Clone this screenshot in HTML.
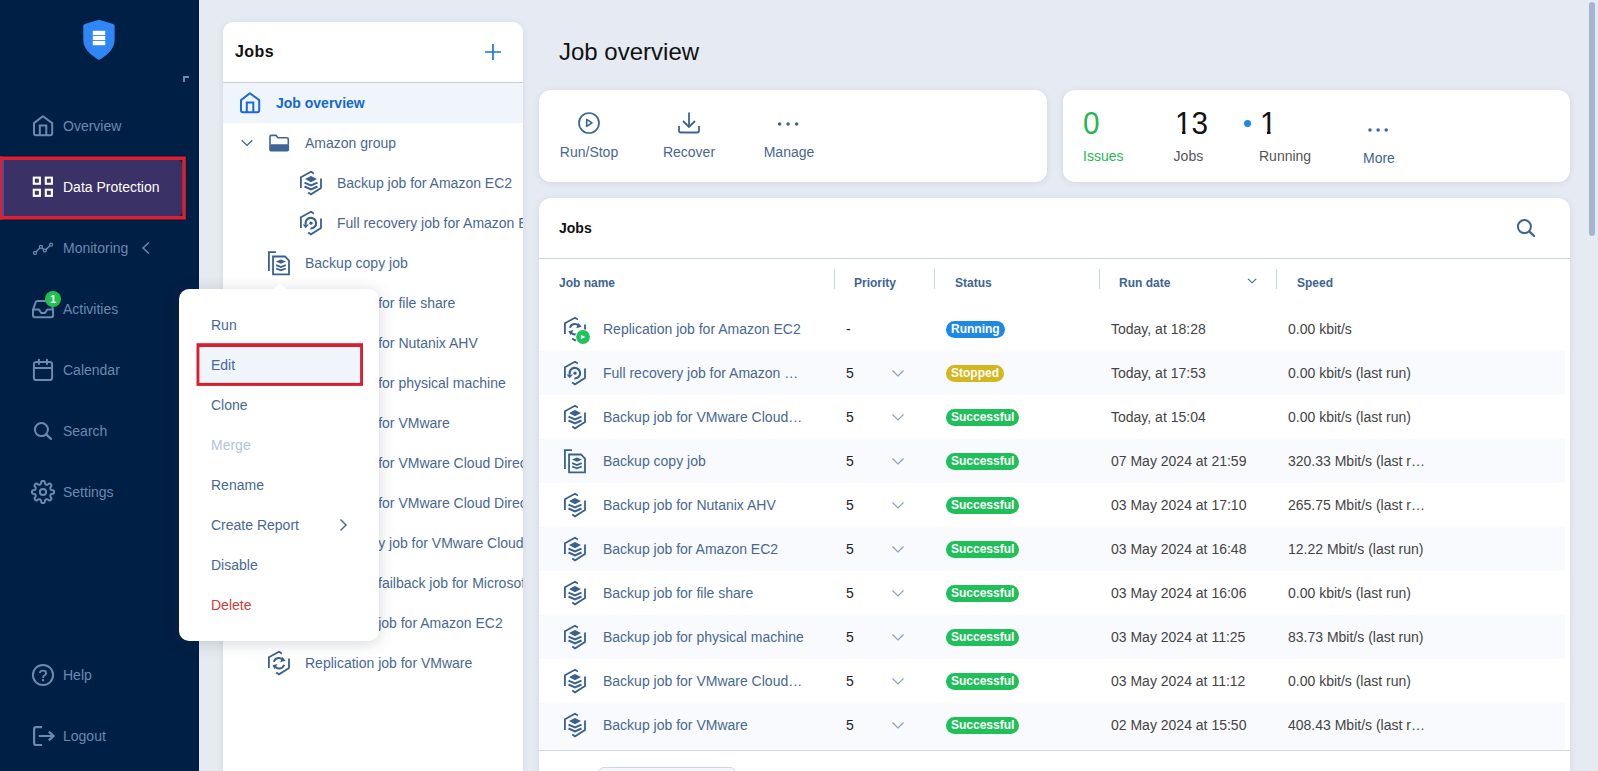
<!DOCTYPE html>
<html lang="en"><head><meta charset="utf-8"><title>Job overview</title>
<style>
html,body{margin:0;padding:0;}
body{width:1598px;height:771px;overflow:hidden;position:relative;background:#e6eaf3;font-family:"Liberation Sans",Arial,sans-serif;font-size:14px;}
#side{position:absolute;left:0;top:0;width:199px;height:771px;background:#001f44;}
#dp-bg{position:absolute;left:0;top:158px;width:183px;height:60px;background:#3a3166;border-radius:0 9px 9px 0;}
#dp-strip{position:absolute;left:2px;top:160px;width:2px;height:56px;background:#2158b8;}
.sitem{position:absolute;left:0;height:24px;line-height:24px;font-size:14px;white-space:nowrap;width:199px;}
.sitem span{position:absolute;left:63px;top:0;}
#tree{position:absolute;left:223px;top:22px;width:300px;height:760px;background:#fff;border-radius:10px 10px 0 0;overflow:hidden;box-shadow:0 1px 6px rgba(50,60,85,.11);}
.thead{position:absolute;left:12px;top:21px;font-size:16px;letter-spacing:.45px;font-weight:bold;color:#111;}
.tsel{position:absolute;left:0;top:60px;width:300px;height:41px;background:#f0f5fc;border-top:1px solid #c0cddc;box-sizing:border-box;}
.trow{position:absolute;height:20px;line-height:20px;font-size:14px;color:#486892;white-space:nowrap;}
#menu{position:absolute;left:179px;top:289px;width:200px;height:352px;background:#fff;border-radius:10px;box-shadow:0 2px 16px rgba(40,50,75,.20);}
.mi{position:absolute;left:32px;height:20px;line-height:20px;font-size:14px;white-space:nowrap;}
#title{position:absolute;left:559px;top:38px;font-size:24px;line-height:28px;color:#111;}
.card{position:absolute;background:#fff;border-radius:12px;box-shadow:0 1px 6px rgba(50,60,85,.11);}
.alabel{position:absolute;top:53px;text-align:center;font-size:14px;color:#486892;line-height:18px;}
.num{position:absolute;top:14px;font-size:32px;line-height:38px;transform:scaleX(.93);transform-origin:left center;}
.one{display:inline-block;clip-path:polygon(0 0,18px 0,18px 27px,11.300px 27px,11.300px 38px,7.500px 38px,7.500px 27px,0 27px);}
.nlab{position:absolute;top:57px;font-size:14px;line-height:18px;}
.th{position:absolute;top:77px;font-size:12px;font-weight:bold;color:#3d6494;line-height:16px;}
.row{position:absolute;left:0;width:1026px;height:44px;}
.row .c{position:absolute;top:12px;line-height:20px;font-size:14px;white-space:nowrap;}
.badge{position:absolute;top:14px;height:17px;line-height:17px;border-radius:8.500px;padding:0 5px;color:#fff;font-size:12px;font-weight:bold;}
#sb{position:absolute;left:1589px;top:2px;width:6px;height:234px;border-radius:3px;background:#a3b5d1;}
</style></head><body>
<div id="side"><div id="dp-bg"></div><div id="dp-strip"></div><svg width="190" height="66" viewBox="0 0 190 66" style="position:absolute;left:0;top:156px;"><path d="M0 2.200 H184.050 V61.750 H0" fill="none" stroke="#dd1f2e" stroke-width="3.500"/><rect x="0" y="0.450" width="2.500" height="63.050" fill="#dd1f2e"/></svg><div class="sitem" style="top:114px;color:#6c89b0"><svg width="24" height="24" viewBox="0 0 24 24" style="position:absolute;left:31px;top:0;overflow:visible;"><path d="M3 9.100 L11.900 2.300 L21.200 9.100 V19.200 Q21.200 21.200 19.200 21.200 H5 Q3 21.200 3 19.200 Z" fill="none" stroke="#6c89b0" stroke-width="2" stroke-linejoin="round"/><path d="M8.800 21.200 V11.400 H15.300 V21.200" fill="none" stroke="#6c89b0" stroke-width="2"/></svg><span>Overview</span></div><div class="sitem" style="top:175px;color:#ffffff"><svg width="24" height="24" viewBox="0 0 24 24" style="position:absolute;left:31px;top:0;overflow:visible;"><rect x="2.800" y="2.650" width="6.100" height="6.100" fill="none" stroke="#ffffff" stroke-width="2.100"/><rect x="14.800" y="2.650" width="6.100" height="6.100" fill="none" stroke="#ffffff" stroke-width="2.100"/><rect x="2.800" y="14.750" width="6.100" height="6.100" fill="none" stroke="#ffffff" stroke-width="2.100"/><rect x="14.800" y="14.750" width="6.100" height="6.100" fill="none" stroke="#ffffff" stroke-width="2.100"/></svg><span>Data Protection</span></div><div class="sitem" style="top:236px;color:#6c89b0"><svg width="24" height="24" viewBox="0 0 24 24" style="position:absolute;left:31px;top:0;overflow:visible;"><path d="M4 16.900 L9.900 10.800 L13.800 14.600 L20 8.700" fill="none" stroke="#6c89b0" stroke-width="1.500"/><circle cx="4" cy="16.900" r="1.500" fill="#001e42" stroke="#6c89b0" stroke-width="1.300"/><circle cx="9.900" cy="10.800" r="1.500" fill="#001e42" stroke="#6c89b0" stroke-width="1.300"/><circle cx="13.800" cy="14.600" r="1.500" fill="#001e42" stroke="#6c89b0" stroke-width="1.300"/><circle cx="20" cy="8.700" r="1.500" fill="#001e42" stroke="#6c89b0" stroke-width="1.300"/></svg><span>Monitoring</span></div><div class="sitem" style="top:297px;color:#6c89b0"><svg width="24" height="24" viewBox="0 0 24 24" style="position:absolute;left:31px;top:0;overflow:visible;"><path d="M2 12.600 L4.600 5.300 Q5 4 6.400 4 H18.200 Q19.600 4 20 5.300 L22.100 12.600 V18.200 Q22.100 20.200 20.100 20.200 H4 Q2 20.200 2 18.200 Z" fill="none" stroke="#6c89b0" stroke-width="2" stroke-linejoin="round"/><path d="M2 12.600 H8 L10.200 16 H14 L16.200 12.600 H22.100" fill="none" stroke="#6c89b0" stroke-width="2" stroke-linejoin="round"/></svg><span>Activities</span></div><div class="sitem" style="top:358px;color:#6c89b0"><svg width="24" height="24" viewBox="0 0 24 24" style="position:absolute;left:31px;top:0;overflow:visible;"><rect x="2.900" y="4" width="18.200" height="18.100" rx="2.400" fill="none" stroke="#6c89b0" stroke-width="2"/><path d="M2.900 9.900 H21.100 M7.900 1.100 V6.800 M16 1.100 V6.800" fill="none" stroke="#6c89b0" stroke-width="2"/></svg><span>Calendar</span></div><div class="sitem" style="top:419px;color:#6c89b0"><svg width="24" height="24" viewBox="0 0 24 24" style="position:absolute;left:31px;top:0;overflow:visible;"><circle cx="10.400" cy="10.600" r="6.500" fill="none" stroke="#6c89b0" stroke-width="2"/><path d="M15.200 15.400 L20 19.900" stroke="#6c89b0" stroke-width="2.200" stroke-linecap="round"/></svg><span>Search</span></div><div class="sitem" style="top:480px;color:#6c89b0"><svg width="24" height="24" viewBox="0 0 24 24" style="position:absolute;left:31px;top:0;overflow:visible;"><circle cx="12" cy="12" r="3.100" fill="none" stroke="#6c89b0" stroke-width="2"/><path d="M12.00 0.90 L12.36 0.93 L12.72 1.02 L13.07 1.18 L13.39 1.41 L13.69 1.75 L13.86 2.63 L13.98 3.52 L14.18 3.87 L14.39 4.13 L14.60 4.33 L14.83 4.49 L15.06 4.61 L15.31 4.69 L15.58 4.74 L15.88 4.75 L16.21 4.71 L16.60 4.61 L17.31 4.06 L18.05 3.55 L18.50 3.52 L18.90 3.59 L19.25 3.73 L19.57 3.92 L19.85 4.15 L20.08 4.43 L20.27 4.75 L20.41 5.10 L20.48 5.50 L20.45 5.95 L19.94 6.69 L19.39 7.40 L19.29 7.79 L19.25 8.12 L19.26 8.42 L19.31 8.69 L19.39 8.94 L19.51 9.17 L19.67 9.40 L19.87 9.61 L20.13 9.82 L20.48 10.02 L21.37 10.14 L22.25 10.31 L22.59 10.61 L22.82 10.93 L22.98 11.28 L23.07 11.64 L23.10 12.00 L23.07 12.36 L22.98 12.72 L22.82 13.07 L22.59 13.39 L22.25 13.69 L21.37 13.86 L20.48 13.98 L20.13 14.18 L19.87 14.39 L19.67 14.60 L19.51 14.83 L19.39 15.06 L19.31 15.31 L19.26 15.58 L19.25 15.88 L19.29 16.21 L19.39 16.60 L19.94 17.31 L20.45 18.05 L20.48 18.50 L20.41 18.90 L20.27 19.25 L20.08 19.57 L19.85 19.85 L19.57 20.08 L19.25 20.27 L18.90 20.41 L18.50 20.48 L18.05 20.45 L17.31 19.94 L16.60 19.39 L16.21 19.29 L15.88 19.25 L15.58 19.26 L15.31 19.31 L15.06 19.39 L14.83 19.51 L14.60 19.67 L14.39 19.87 L14.18 20.13 L13.98 20.48 L13.86 21.37 L13.69 22.25 L13.39 22.59 L13.07 22.82 L12.72 22.98 L12.36 23.07 L12.00 23.10 L11.64 23.07 L11.28 22.98 L10.93 22.82 L10.61 22.59 L10.31 22.25 L10.14 21.37 L10.02 20.48 L9.82 20.13 L9.61 19.87 L9.40 19.67 L9.17 19.51 L8.94 19.39 L8.69 19.31 L8.42 19.26 L8.12 19.25 L7.79 19.29 L7.40 19.39 L6.69 19.94 L5.95 20.45 L5.50 20.48 L5.10 20.41 L4.75 20.27 L4.43 20.08 L4.15 19.85 L3.92 19.57 L3.73 19.25 L3.59 18.90 L3.52 18.50 L3.55 18.05 L4.06 17.31 L4.61 16.60 L4.71 16.21 L4.75 15.88 L4.74 15.58 L4.69 15.31 L4.61 15.06 L4.49 14.83 L4.33 14.60 L4.13 14.39 L3.87 14.18 L3.52 13.98 L2.63 13.86 L1.75 13.69 L1.41 13.39 L1.18 13.07 L1.02 12.72 L0.93 12.36 L0.90 12.00 L0.93 11.64 L1.02 11.28 L1.18 10.93 L1.41 10.61 L1.75 10.31 L2.63 10.14 L3.52 10.02 L3.87 9.82 L4.13 9.61 L4.33 9.40 L4.49 9.17 L4.61 8.94 L4.69 8.69 L4.74 8.42 L4.75 8.12 L4.71 7.79 L4.61 7.40 L4.06 6.69 L3.55 5.95 L3.52 5.50 L3.59 5.10 L3.73 4.75 L3.92 4.43 L4.15 4.15 L4.43 3.92 L4.75 3.73 L5.10 3.59 L5.50 3.52 L5.95 3.55 L6.69 4.06 L7.40 4.61 L7.79 4.71 L8.12 4.75 L8.42 4.74 L8.69 4.69 L8.94 4.61 L9.17 4.49 L9.40 4.33 L9.61 4.13 L9.82 3.87 L10.02 3.52 L10.14 2.63 L10.31 1.75 L10.61 1.41 L10.93 1.18 L11.28 1.02 L11.64 0.93 Z" fill="none" stroke="#6c89b0" stroke-width="2" stroke-linejoin="round"/></svg><span>Settings</span></div><div class="sitem" style="top:663px;color:#6c89b0"><svg width="24" height="24" viewBox="0 0 24 24" style="position:absolute;left:31px;top:0;overflow:visible;"><circle cx="12" cy="12" r="10.100" fill="none" stroke="#6c89b0" stroke-width="2"/><path d="M8.900 10 Q8.900 7.600 12 7.600 Q15.200 7.600 15.200 10.100 Q15.200 11.600 13.400 12.500 Q12.100 13.200 12.100 14.900" fill="none" stroke="#6c89b0" stroke-width="1.900"/><rect x="11" y="16.100" width="2.100" height="2.100" fill="#6c89b0"/></svg><span>Help</span></div><div class="sitem" style="top:724px;color:#6c89b0"><svg width="24" height="24" viewBox="0 0 24 24" style="position:absolute;left:31px;top:0;overflow:visible;"><path d="M11.100 3.100 H5.100 Q3.100 3.100 3.100 5.100 V19 Q3.100 21 5.100 21 H11.100" fill="none" stroke="#6c89b0" stroke-width="2.200"/><path d="M7.800 12 H22 M17.800 7.600 L22.600 12 L17.800 16.400" fill="none" stroke="#6c89b0" stroke-width="2.200"/></svg><span>Logout</span></div><svg width="40" height="44" viewBox="0 0 40 44" style="position:absolute;left:79px;top:18px;"><path d="M20 1.800 L34.200 5.900 Q35.600 6.300 35.600 7.800 V22 Q35.600 33 20 42 Q4.300 33 4.300 22 V7.800 Q4.300 6.300 5.700 5.900 Z" fill="#2f87f5"/><rect x="13.800" y="12.800" width="12.400" height="4.200" fill="#fff"/><rect x="13.800" y="17.900" width="12.400" height="4.200" fill="#fff"/><rect x="13.800" y="23" width="12.400" height="4.200" fill="#fff"/></svg><div style="position:absolute;left:183px;top:76px;width:6px;height:6px;border-left:2px solid #6c89b0;border-top:2px solid #6c89b0;box-sizing:border-box"></div><svg width="12" height="16" viewBox="0 0 12 16" style="position:absolute;left:140px;top:240px;"><path d="M9 2.500 L3 8 L9 13.500" fill="none" stroke="#6c89b0" stroke-width="1.500"/></svg><div style="position:absolute;left:45px;top:291px;width:16px;height:16px;border-radius:8px;background:#1fc24d;color:#fff;font-size:11px;font-weight:bold;line-height:16px;text-align:center;">1</div></div>
<div id="tree"><div class="thead">Jobs</div><svg width="20" height="20" viewBox="0 0 20 20" style="position:absolute;left:260px;top:20px;"><path d="M10 2 V18 M2 10 H18" stroke="#1b76d6" stroke-width="1.700"/></svg><div class="tsel"></div><svg width="24" height="24" viewBox="0 0 24 24" style="position:absolute;left:15px;top:69.100px;"><path d="M3 9.100 L11.900 2.300 L21.200 9.100 V19.200 Q21.200 21.200 19.200 21.200 H5 Q3 21.200 3 19.200 Z" fill="none" stroke="#1a6ad8" stroke-width="2" stroke-linejoin="round"/><path d="M8.800 21.200 V11.400 H15.300 V21.200" fill="none" stroke="#1a6ad8" stroke-width="2"/></svg><div class="trow" style="top:71px;left:53px;color:#1368d0;font-weight:bold">Job overview</div><svg width="16" height="12" viewBox="0 0 16 12" style="position:absolute;left:16px;top:115px;"><path d="M2.700 3.300 L8 8.400 L13.300 3.300" fill="none" stroke="#3d6494" stroke-width="1.300"/></svg><svg width="26" height="22" viewBox="0 0 26 22" style="position:absolute;left:43px;top:110px;"><path d="M4 12.500 V4.800 Q4 3.400 5.400 3.400 H10 L12 5.700 H20.900 Q22.300 5.700 22.300 7.100 V12.500" fill="none" stroke="#3d6494" stroke-width="1.600"/><path d="M3.200 12.200 H23.100 V17.700 Q23.100 19.400 21.400 19.400 H4.900 Q3.200 19.400 3.200 17.700 Z" fill="#3d6494"/></svg><div class="trow" style="top:111px;left:82px;">Amazon group</div><svg width="24" height="25" viewBox="0 0 24 25" style="position:absolute;left:76px;top:148.7px;overflow:visible;"><path d="M1.9 17.1 V6.2 L12 0.8 L14.9 2.6 M22 7.500 V17.1 L12 23.350 L9.2 21.500" fill="none" stroke="#39608f" stroke-width="1.800" stroke-linejoin="miter"/><path d="M6 8.100 L12 5.100 L18 8.100 L12 11.200 Z" fill="#39608f"/><path d="M5.500 11.600 L12 14.400 L18.500 11.600 M5.500 15.500 L12 18.300 L18.500 15.500" fill="none" stroke="#39608f" stroke-width="2"/></svg><div class="trow" style="top:151px;left:114px;">Backup job for Amazon EC2</div><svg width="24" height="25" viewBox="0 0 24 25" style="position:absolute;left:76px;top:188.7px;overflow:visible;"><path d="M1.9 17.1 V6.2 L12 0.8 L14.9 2.6 M22 7.500 V17.1 L12 23.350 L9.2 21.500" fill="none" stroke="#39608f" stroke-width="1.800" stroke-linejoin="miter"/><path d="M6.700 13.400 A5.300 5.300 0 1 1 11.400 17.450" fill="none" stroke="#39608f" stroke-width="2.100"/><path d="M3.700 13.400 H9.900 L6.700 17.300 Z" fill="#39608f"/><circle cx="12" cy="12.200" r="1.650" fill="#39608f"/></svg><div class="trow" style="top:191px;left:114px;">Full recovery job for Amazon EC2</div><svg width="24" height="25" viewBox="0 0 24 25" style="position:absolute;left:44px;top:228.7px;overflow:visible;"><path d="M1.900 20.050 V1.100 H8.900" fill="none" stroke="#39608f" stroke-width="1.800"/><path d="M6.050 5.500 H18 L22 9.700 V23.300 H6.050 Z" fill="none" stroke="#39608f" stroke-width="1.800" stroke-linejoin="miter"/><path d="M8.900 10.550 L13.900 8.400 L19 10.550 L13.900 12.700 Z" fill="#39608f"/><path d="M9.150 14.100 L13.900 16 L18.750 14.100 M9.150 17.450 L13.900 19.350 L18.750 17.450" fill="none" stroke="#39608f" stroke-width="1.700"/></svg><div class="trow" style="top:231px;left:82px;">Backup copy job</div><svg width="24" height="25" viewBox="0 0 24 25" style="position:absolute;left:44px;top:268.7px;overflow:visible;"><path d="M1.9 17.1 V6.2 L12 0.8 L14.9 2.6 M22 7.500 V17.1 L12 23.350 L9.2 21.500" fill="none" stroke="#39608f" stroke-width="1.800" stroke-linejoin="miter"/><path d="M6 8.100 L12 5.100 L18 8.100 L12 11.200 Z" fill="#39608f"/><path d="M5.500 11.600 L12 14.400 L18.500 11.600 M5.500 15.500 L12 18.300 L18.500 15.500" fill="none" stroke="#39608f" stroke-width="2"/></svg><div class="trow" style="top:271px;left:82px;">Backup job for file share</div><svg width="24" height="25" viewBox="0 0 24 25" style="position:absolute;left:44px;top:308.7px;overflow:visible;"><path d="M1.9 17.1 V6.2 L12 0.8 L14.9 2.6 M22 7.500 V17.1 L12 23.350 L9.2 21.500" fill="none" stroke="#39608f" stroke-width="1.800" stroke-linejoin="miter"/><path d="M6 8.100 L12 5.100 L18 8.100 L12 11.200 Z" fill="#39608f"/><path d="M5.500 11.600 L12 14.400 L18.500 11.600 M5.500 15.500 L12 18.300 L18.500 15.500" fill="none" stroke="#39608f" stroke-width="2"/></svg><div class="trow" style="top:311px;left:82px;">Backup job for Nutanix AHV</div><svg width="24" height="25" viewBox="0 0 24 25" style="position:absolute;left:44px;top:348.7px;overflow:visible;"><path d="M1.9 17.1 V6.2 L12 0.8 L14.9 2.6 M22 7.500 V17.1 L12 23.350 L9.2 21.500" fill="none" stroke="#39608f" stroke-width="1.800" stroke-linejoin="miter"/><path d="M6 8.100 L12 5.100 L18 8.100 L12 11.200 Z" fill="#39608f"/><path d="M5.500 11.600 L12 14.400 L18.500 11.600 M5.500 15.500 L12 18.300 L18.500 15.500" fill="none" stroke="#39608f" stroke-width="2"/></svg><div class="trow" style="top:351px;left:82px;">Backup job for physical machine</div><svg width="24" height="25" viewBox="0 0 24 25" style="position:absolute;left:44px;top:388.7px;overflow:visible;"><path d="M1.9 17.1 V6.2 L12 0.8 L14.9 2.6 M22 7.500 V17.1 L12 23.350 L9.2 21.500" fill="none" stroke="#39608f" stroke-width="1.800" stroke-linejoin="miter"/><path d="M6 8.100 L12 5.100 L18 8.100 L12 11.200 Z" fill="#39608f"/><path d="M5.500 11.600 L12 14.400 L18.500 11.600 M5.500 15.500 L12 18.300 L18.500 15.500" fill="none" stroke="#39608f" stroke-width="2"/></svg><div class="trow" style="top:391px;left:82px;">Backup job for VMware</div><svg width="24" height="25" viewBox="0 0 24 25" style="position:absolute;left:44px;top:428.7px;overflow:visible;"><path d="M1.9 17.1 V6.2 L12 0.8 L14.9 2.6 M22 7.500 V17.1 L12 23.350 L9.2 21.500" fill="none" stroke="#39608f" stroke-width="1.800" stroke-linejoin="miter"/><path d="M6 8.100 L12 5.100 L18 8.100 L12 11.200 Z" fill="#39608f"/><path d="M5.500 11.600 L12 14.400 L18.500 11.600 M5.500 15.500 L12 18.300 L18.500 15.500" fill="none" stroke="#39608f" stroke-width="2"/></svg><div class="trow" style="top:431px;left:82px;">Backup job for VMware Cloud Director</div><svg width="24" height="25" viewBox="0 0 24 25" style="position:absolute;left:44px;top:468.7px;overflow:visible;"><path d="M1.9 17.1 V6.2 L12 0.8 L14.9 2.6 M22 7.500 V17.1 L12 23.350 L9.2 21.500" fill="none" stroke="#39608f" stroke-width="1.800" stroke-linejoin="miter"/><path d="M6 8.100 L12 5.100 L18 8.100 L12 11.200 Z" fill="#39608f"/><path d="M5.500 11.600 L12 14.400 L18.500 11.600 M5.500 15.500 L12 18.300 L18.500 15.500" fill="none" stroke="#39608f" stroke-width="2"/></svg><div class="trow" style="top:471px;left:82px;">Backup job for VMware Cloud Director 2</div><svg width="24" height="25" viewBox="0 0 24 25" style="position:absolute;left:44px;top:508.7px;overflow:visible;"><path d="M1.9 17.1 V6.2 L12 0.8 L14.9 2.6 M22 7.500 V17.1 L12 23.350 L9.2 21.500" fill="none" stroke="#39608f" stroke-width="1.800" stroke-linejoin="miter"/><path d="M6.700 13.400 A5.300 5.300 0 1 1 11.400 17.450" fill="none" stroke="#39608f" stroke-width="2.100"/><path d="M3.700 13.400 H9.900 L6.700 17.300 Z" fill="#39608f"/><circle cx="12" cy="12.200" r="1.650" fill="#39608f"/></svg><div class="trow" style="top:511px;left:82px;">Full recovery job for VMware Cloud Director</div><svg width="24" height="25" viewBox="0 0 24 25" style="position:absolute;left:44px;top:548.7px;overflow:visible;"><path d="M1.9 17.1 V6.2 L12 0.8 L14.9 2.6 M22 7.500 V17.1 L12 23.350 L9.2 21.500" fill="none" stroke="#39608f" stroke-width="1.800" stroke-linejoin="miter"/><path d="M6.900 10.700 A5.200 5.200 0 0 1 16.300 9.400 M17.100 13.700 A5.200 5.200 0 0 1 7.700 15" fill="none" stroke="#39608f" stroke-width="2"/><path d="M15.400 5.900 L18.600 9.700 L13.200 11.200 Z M5.400 14.200 L10.400 12.900 L7.700 18.300 Z" fill="#39608f"/></svg><div class="trow" style="top:551px;left:82px;">Failover &amp;</div><div class="trow" style="top:551px;left:155px;">failback job for Microsoft Hyper-V</div><svg width="24" height="25" viewBox="0 0 24 25" style="position:absolute;left:44px;top:588.7px;overflow:visible;"><path d="M1.9 17.1 V6.2 L12 0.8 L14.9 2.6 M22 7.500 V17.1 L12 23.350 L9.2 21.500" fill="none" stroke="#39608f" stroke-width="1.800" stroke-linejoin="miter"/><path d="M6.900 10.700 A5.200 5.200 0 0 1 16.300 9.400 M17.100 13.700 A5.200 5.200 0 0 1 7.700 15" fill="none" stroke="#39608f" stroke-width="2"/><path d="M15.400 5.900 L18.600 9.700 L13.200 11.200 Z M5.400 14.200 L10.400 12.900 L7.700 18.300 Z" fill="#39608f"/></svg><div class="trow" style="top:591px;left:82px;">Replication job for Amazon EC2</div><svg width="24" height="25" viewBox="0 0 24 25" style="position:absolute;left:44px;top:628.7px;overflow:visible;"><path d="M1.9 17.1 V6.2 L12 0.8 L14.9 2.6 M22 7.500 V17.1 L12 23.350 L9.2 21.500" fill="none" stroke="#39608f" stroke-width="1.800" stroke-linejoin="miter"/><path d="M6.900 10.700 A5.200 5.200 0 0 1 16.300 9.400 M17.100 13.700 A5.200 5.200 0 0 1 7.700 15" fill="none" stroke="#39608f" stroke-width="2"/><path d="M15.400 5.900 L18.600 9.700 L13.200 11.200 Z M5.400 14.200 L10.400 12.900 L7.700 18.300 Z" fill="#39608f"/></svg><div class="trow" style="top:631px;left:82px;">Replication job for VMware</div></div>
<div id="title">Job overview</div><div class="card" style="left:539px;top:90px;width:508px;height:92px;"><svg width="26" height="26" viewBox="0 0 26 26" style="position:absolute;left:37px;top:20px;"><circle cx="13" cy="13" r="10" fill="none" stroke="#3d6494" stroke-width="1.700"/><path d="M10.700 9.400 L16 12.900 L10.700 16.400 Z" fill="none" stroke="#3d6494" stroke-width="1.600" stroke-linejoin="round"/></svg><div class="alabel" style="left:0;width:100px;">Run/Stop</div><svg width="26" height="26" viewBox="0 0 26 26" style="position:absolute;left:137px;top:20px;"><path d="M13 2.500 V16.500 M7 11 L13 17 L19 11" fill="none" stroke="#3d6494" stroke-width="1.800"/><path d="M3 16 V20.500 Q3 22.500 5 22.500 H21 Q23 22.500 23 20.500 V16" fill="none" stroke="#3d6494" stroke-width="1.800"/></svg><div class="alabel" style="left:100px;width:100px;">Recover</div><svg width="26" height="26" viewBox="0 0 26 26" style="position:absolute;left:236px;top:21px;"><circle cx="4.600" cy="13" r="1.800" fill="#3d6494"/><circle cx="13.100" cy="13" r="1.800" fill="#3d6494"/><circle cx="21.600" cy="13" r="1.800" fill="#3d6494"/></svg><div class="alabel" style="left:200px;width:100px;">Manage</div></div><div class="card" style="left:1063px;top:90px;width:507px;height:92px;"><div class="num" style="left:19.500px;color:#1fb855">0</div><div class="nlab" style="left:20px;color:#1fb855">Issues</div><div class="num" style="left:112px;color:#111"><span class="one">1</span>3</div><div class="nlab" style="left:110.600px;color:#555">Jobs</div><div style="position:absolute;left:181px;top:30px;width:7px;height:7px;border-radius:4px;background:#1e88e5"></div><div class="num" style="left:197px;color:#111"><span class="one">1</span></div><div class="nlab" style="left:196px;color:#555">Running</div><svg width="26" height="10" viewBox="0 0 26 10" style="position:absolute;left:302px;top:34.800px;"><circle cx="5" cy="5" r="1.750" fill="#3d6494"/><circle cx="13.100" cy="5" r="1.750" fill="#3d6494"/><circle cx="21.200" cy="5" r="1.750" fill="#3d6494"/></svg><div style="position:absolute;left:300px;top:60px;font-size:14px;color:#3d6494;">More</div></div><div class="card" id="tbl" style="left:539px;top:198px;width:1031px;height:640px;"><div style="position:absolute;left:20px;top:22px;font-size:14px;font-weight:bold;color:#111;">Jobs</div><svg width="24" height="24" viewBox="0 0 24 24" style="position:absolute;left:975px;top:18px;"><circle cx="10.400" cy="10.600" r="6.500" fill="none" stroke="#3d6494" stroke-width="2"/><path d="M15.200 15.400 L20 19.900" stroke="#3d6494" stroke-width="2.200" stroke-linecap="round"/></svg><div style="position:absolute;left:0;top:60px;width:100%;height:1px;background:#c9d3e3;"></div><div class="th" style="left:20px;">Job name</div><div class="th" style="left:315px;">Priority</div><div class="th" style="left:416px;">Status</div><div class="th" style="left:580px;">Run date</div><div class="th" style="left:758px;">Speed</div><div style="position:absolute;left:295px;top:71px;width:1px;height:20px;background:#ccd6e4;"></div><div style="position:absolute;left:395px;top:71px;width:1px;height:20px;background:#ccd6e4;"></div><div style="position:absolute;left:560px;top:71px;width:1px;height:20px;background:#ccd6e4;"></div><div style="position:absolute;left:737px;top:71px;width:1px;height:20px;background:#ccd6e4;"></div><svg width="12" height="10" viewBox="0 0 12 10" style="position:absolute;left:707px;top:78px;"><path d="M2 2.800 L6.100 6.800 L10.200 2.800" fill="none" stroke="#3d6494" stroke-width="1.100"/></svg><div class="row" style="top:109px;height:44px;background:#ffffff;"><svg width="24" height="25" viewBox="0 0 24 25" style="position:absolute;left:24px;top:9.5px;overflow:visible;"><path d="M1.9 17.1 V6.2 L12 0.8 L14.9 2.6 M22 7.500 V17.1 L12 23.350 L9.2 21.500" fill="none" stroke="#39608f" stroke-width="1.800" stroke-linejoin="miter"/><path d="M6.900 10.700 A5.200 5.200 0 0 1 16.300 9.400 M17.100 13.700 A5.200 5.200 0 0 1 7.700 15" fill="none" stroke="#39608f" stroke-width="2"/><path d="M15.400 5.900 L18.600 9.700 L13.200 11.200 Z M5.400 14.200 L10.400 12.900 L7.700 18.300 Z" fill="#39608f"/></svg><svg width="16" height="16" viewBox="0 0 16 16" style="position:absolute;left:36px;top:21.750px;"><circle cx="8" cy="8" r="7.800" fill="#fff"/><circle cx="8" cy="8" r="6.900" fill="#1ec35e"/><path d="M5.900 5.700 L10.400 8 L5.900 10.350 Z" fill="#fff"/></svg><div class="c" style="left:64px;color:#486892">Replication job for Amazon EC2</div><div class="c" style="left:307px;color:#222">-</div><div class="badge" style="left:407px;background:#1e88e5">Running</div><div class="c" style="left:572px;color:#444">Today, at 18:28</div><div class="c" style="left:749px;color:#444">0.00 kbit/s</div></div><div class="row" style="top:153px;height:44px;background:#f9fafd;"><svg width="24" height="25" viewBox="0 0 24 25" style="position:absolute;left:24px;top:9.5px;overflow:visible;"><path d="M1.9 17.1 V6.2 L12 0.8 L14.9 2.6 M22 7.500 V17.1 L12 23.350 L9.2 21.500" fill="none" stroke="#39608f" stroke-width="1.800" stroke-linejoin="miter"/><path d="M6.700 13.400 A5.300 5.300 0 1 1 11.400 17.450" fill="none" stroke="#39608f" stroke-width="2.100"/><path d="M3.700 13.400 H9.900 L6.700 17.300 Z" fill="#39608f"/><circle cx="12" cy="12.200" r="1.650" fill="#39608f"/></svg><div class="c" style="left:64px;color:#486892">Full recovery job for Amazon …</div><div class="c" style="left:307px;color:#222">5</div><svg width="14" height="10" viewBox="0 0 14 10" style="position:absolute;left:352px;top:17px;"><path d="M1.500 2.500 L7 8 L12.500 2.500" fill="none" stroke="#8aa0bd" stroke-width="1.200"/></svg><div class="badge" style="left:407px;background:#d4b61e">Stopped</div><div class="c" style="left:572px;color:#444">Today, at 17:53</div><div class="c" style="left:749px;color:#444">0.00 kbit/s (last run)</div></div><div class="row" style="top:197px;height:44px;background:#ffffff;"><svg width="24" height="25" viewBox="0 0 24 25" style="position:absolute;left:24px;top:9.5px;overflow:visible;"><path d="M1.9 17.1 V6.2 L12 0.8 L14.9 2.6 M22 7.500 V17.1 L12 23.350 L9.2 21.500" fill="none" stroke="#39608f" stroke-width="1.800" stroke-linejoin="miter"/><path d="M6 8.100 L12 5.100 L18 8.100 L12 11.200 Z" fill="#39608f"/><path d="M5.500 11.600 L12 14.400 L18.500 11.600 M5.500 15.500 L12 18.300 L18.500 15.500" fill="none" stroke="#39608f" stroke-width="2"/></svg><div class="c" style="left:64px;color:#486892">Backup job for VMware Cloud…</div><div class="c" style="left:307px;color:#222">5</div><svg width="14" height="10" viewBox="0 0 14 10" style="position:absolute;left:352px;top:17px;"><path d="M1.500 2.500 L7 8 L12.500 2.500" fill="none" stroke="#8aa0bd" stroke-width="1.200"/></svg><div class="badge" style="left:407px;background:#1fc05a">Successful</div><div class="c" style="left:572px;color:#444">Today, at 15:04</div><div class="c" style="left:749px;color:#444">0.00 kbit/s (last run)</div></div><div class="row" style="top:241px;height:44px;background:#f9fafd;"><svg width="24" height="25" viewBox="0 0 24 25" style="position:absolute;left:24px;top:9.5px;overflow:visible;"><path d="M1.900 20.050 V1.100 H8.900" fill="none" stroke="#39608f" stroke-width="1.800"/><path d="M6.050 5.500 H18 L22 9.700 V23.300 H6.050 Z" fill="none" stroke="#39608f" stroke-width="1.800" stroke-linejoin="miter"/><path d="M8.900 10.550 L13.900 8.400 L19 10.550 L13.900 12.700 Z" fill="#39608f"/><path d="M9.150 14.100 L13.900 16 L18.750 14.100 M9.150 17.450 L13.900 19.350 L18.750 17.450" fill="none" stroke="#39608f" stroke-width="1.700"/></svg><div class="c" style="left:64px;color:#486892">Backup copy job</div><div class="c" style="left:307px;color:#222">5</div><svg width="14" height="10" viewBox="0 0 14 10" style="position:absolute;left:352px;top:17px;"><path d="M1.500 2.500 L7 8 L12.500 2.500" fill="none" stroke="#8aa0bd" stroke-width="1.200"/></svg><div class="badge" style="left:407px;background:#1fc05a">Successful</div><div class="c" style="left:572px;color:#444">07 May 2024 at 21:59</div><div class="c" style="left:749px;color:#444">320.33 Mbit/s (last r…</div></div><div class="row" style="top:285px;height:44px;background:#ffffff;"><svg width="24" height="25" viewBox="0 0 24 25" style="position:absolute;left:24px;top:9.5px;overflow:visible;"><path d="M1.9 17.1 V6.2 L12 0.8 L14.9 2.6 M22 7.500 V17.1 L12 23.350 L9.2 21.500" fill="none" stroke="#39608f" stroke-width="1.800" stroke-linejoin="miter"/><path d="M6 8.100 L12 5.100 L18 8.100 L12 11.200 Z" fill="#39608f"/><path d="M5.500 11.600 L12 14.400 L18.500 11.600 M5.500 15.500 L12 18.300 L18.500 15.500" fill="none" stroke="#39608f" stroke-width="2"/></svg><div class="c" style="left:64px;color:#486892">Backup job for Nutanix AHV</div><div class="c" style="left:307px;color:#222">5</div><svg width="14" height="10" viewBox="0 0 14 10" style="position:absolute;left:352px;top:17px;"><path d="M1.500 2.500 L7 8 L12.500 2.500" fill="none" stroke="#8aa0bd" stroke-width="1.200"/></svg><div class="badge" style="left:407px;background:#1fc05a">Successful</div><div class="c" style="left:572px;color:#444">03 May 2024 at 17:10</div><div class="c" style="left:749px;color:#444">265.75 Mbit/s (last r…</div></div><div class="row" style="top:329px;height:44px;background:#f9fafd;"><svg width="24" height="25" viewBox="0 0 24 25" style="position:absolute;left:24px;top:9.5px;overflow:visible;"><path d="M1.9 17.1 V6.2 L12 0.8 L14.9 2.6 M22 7.500 V17.1 L12 23.350 L9.2 21.500" fill="none" stroke="#39608f" stroke-width="1.800" stroke-linejoin="miter"/><path d="M6 8.100 L12 5.100 L18 8.100 L12 11.200 Z" fill="#39608f"/><path d="M5.500 11.600 L12 14.400 L18.500 11.600 M5.500 15.500 L12 18.300 L18.500 15.500" fill="none" stroke="#39608f" stroke-width="2"/></svg><div class="c" style="left:64px;color:#486892">Backup job for Amazon EC2</div><div class="c" style="left:307px;color:#222">5</div><svg width="14" height="10" viewBox="0 0 14 10" style="position:absolute;left:352px;top:17px;"><path d="M1.500 2.500 L7 8 L12.500 2.500" fill="none" stroke="#8aa0bd" stroke-width="1.200"/></svg><div class="badge" style="left:407px;background:#1fc05a">Successful</div><div class="c" style="left:572px;color:#444">03 May 2024 at 16:48</div><div class="c" style="left:749px;color:#444">12.22 Mbit/s (last run)</div></div><div class="row" style="top:373px;height:44px;background:#ffffff;"><svg width="24" height="25" viewBox="0 0 24 25" style="position:absolute;left:24px;top:9.5px;overflow:visible;"><path d="M1.9 17.1 V6.2 L12 0.8 L14.9 2.6 M22 7.500 V17.1 L12 23.350 L9.2 21.500" fill="none" stroke="#39608f" stroke-width="1.800" stroke-linejoin="miter"/><path d="M6 8.100 L12 5.100 L18 8.100 L12 11.200 Z" fill="#39608f"/><path d="M5.500 11.600 L12 14.400 L18.500 11.600 M5.500 15.500 L12 18.300 L18.500 15.500" fill="none" stroke="#39608f" stroke-width="2"/></svg><div class="c" style="left:64px;color:#486892">Backup job for file share</div><div class="c" style="left:307px;color:#222">5</div><svg width="14" height="10" viewBox="0 0 14 10" style="position:absolute;left:352px;top:17px;"><path d="M1.500 2.500 L7 8 L12.500 2.500" fill="none" stroke="#8aa0bd" stroke-width="1.200"/></svg><div class="badge" style="left:407px;background:#1fc05a">Successful</div><div class="c" style="left:572px;color:#444">03 May 2024 at 16:06</div><div class="c" style="left:749px;color:#444">0.00 kbit/s (last run)</div></div><div class="row" style="top:417px;height:44px;background:#f9fafd;"><svg width="24" height="25" viewBox="0 0 24 25" style="position:absolute;left:24px;top:9.5px;overflow:visible;"><path d="M1.9 17.1 V6.2 L12 0.8 L14.9 2.6 M22 7.500 V17.1 L12 23.350 L9.2 21.500" fill="none" stroke="#39608f" stroke-width="1.800" stroke-linejoin="miter"/><path d="M6 8.100 L12 5.100 L18 8.100 L12 11.200 Z" fill="#39608f"/><path d="M5.500 11.600 L12 14.400 L18.500 11.600 M5.500 15.500 L12 18.300 L18.500 15.500" fill="none" stroke="#39608f" stroke-width="2"/></svg><div class="c" style="left:64px;color:#486892">Backup job for physical machine</div><div class="c" style="left:307px;color:#222">5</div><svg width="14" height="10" viewBox="0 0 14 10" style="position:absolute;left:352px;top:17px;"><path d="M1.500 2.500 L7 8 L12.500 2.500" fill="none" stroke="#8aa0bd" stroke-width="1.200"/></svg><div class="badge" style="left:407px;background:#1fc05a">Successful</div><div class="c" style="left:572px;color:#444">03 May 2024 at 11:25</div><div class="c" style="left:749px;color:#444">83.73 Mbit/s (last run)</div></div><div class="row" style="top:461px;height:44px;background:#ffffff;"><svg width="24" height="25" viewBox="0 0 24 25" style="position:absolute;left:24px;top:9.5px;overflow:visible;"><path d="M1.9 17.1 V6.2 L12 0.8 L14.9 2.6 M22 7.500 V17.1 L12 23.350 L9.2 21.500" fill="none" stroke="#39608f" stroke-width="1.800" stroke-linejoin="miter"/><path d="M6 8.100 L12 5.100 L18 8.100 L12 11.200 Z" fill="#39608f"/><path d="M5.500 11.600 L12 14.400 L18.500 11.600 M5.500 15.500 L12 18.300 L18.500 15.500" fill="none" stroke="#39608f" stroke-width="2"/></svg><div class="c" style="left:64px;color:#486892">Backup job for VMware Cloud…</div><div class="c" style="left:307px;color:#222">5</div><svg width="14" height="10" viewBox="0 0 14 10" style="position:absolute;left:352px;top:17px;"><path d="M1.500 2.500 L7 8 L12.500 2.500" fill="none" stroke="#8aa0bd" stroke-width="1.200"/></svg><div class="badge" style="left:407px;background:#1fc05a">Successful</div><div class="c" style="left:572px;color:#444">03 May 2024 at 11:12</div><div class="c" style="left:749px;color:#444">0.00 kbit/s (last run)</div></div><div class="row" style="top:505px;height:46px;background:#f9fafd;"><svg width="24" height="25" viewBox="0 0 24 25" style="position:absolute;left:24px;top:9.5px;overflow:visible;"><path d="M1.9 17.1 V6.2 L12 0.8 L14.9 2.6 M22 7.500 V17.1 L12 23.350 L9.2 21.500" fill="none" stroke="#39608f" stroke-width="1.800" stroke-linejoin="miter"/><path d="M6 8.100 L12 5.100 L18 8.100 L12 11.200 Z" fill="#39608f"/><path d="M5.500 11.600 L12 14.400 L18.500 11.600 M5.500 15.500 L12 18.300 L18.500 15.500" fill="none" stroke="#39608f" stroke-width="2"/></svg><div class="c" style="left:64px;color:#486892">Backup job for VMware</div><div class="c" style="left:307px;color:#222">5</div><svg width="14" height="10" viewBox="0 0 14 10" style="position:absolute;left:352px;top:17px;"><path d="M1.500 2.500 L7 8 L12.500 2.500" fill="none" stroke="#8aa0bd" stroke-width="1.200"/></svg><div class="badge" style="left:407px;background:#1fc05a">Successful</div><div class="c" style="left:572px;color:#444">02 May 2024 at 15:50</div><div class="c" style="left:749px;color:#444">408.43 Mbit/s (last r…</div></div><div style="position:absolute;left:0;top:552px;width:100%;height:1px;background:#ccd6e4;"></div><div style="position:absolute;left:59px;top:569px;width:138px;height:30px;border:1px solid #ccd6e4;border-radius:6px;box-sizing:border-box;background:#f4f6fb"></div></div>
<div id="menu"><svg width="170" height="46" viewBox="0 0 170 46" style="position:absolute;left:17px;top:53px;"><rect x="0.500" y="1.200" width="166.500" height="42.700" fill="#d91f2e"/><rect x="3.400" y="5" width="160.700" height="35.900" fill="#f0f5fc"/></svg><div class="mi" style="top:26px;color:#486892">Run</div><div class="mi" style="top:66px;color:#486892">Edit</div><div class="mi" style="top:106px;color:#486892">Clone</div><div class="mi" style="top:146px;color:#b3c3d8">Merge</div><div class="mi" style="top:186px;color:#486892">Rename</div><div class="mi" style="top:226px;color:#486892">Create Report</div><div class="mi" style="top:266px;color:#486892">Disable</div><div class="mi" style="top:306px;color:#c9403c">Delete</div><svg width="10" height="16" viewBox="0 0 10 16" style="position:absolute;left:159px;top:228px;"><path d="M2.500 2.500 L8 8 L2.500 13.500" fill="none" stroke="#3d6494" stroke-width="1.400"/></svg></div><div style="position:absolute;left:272px;top:283px;width:0;height:0;border-left:8px solid transparent;border-right:8px solid transparent;border-bottom:7px solid #fff;"></div>
<div id="sb"></div>
</body></html>
